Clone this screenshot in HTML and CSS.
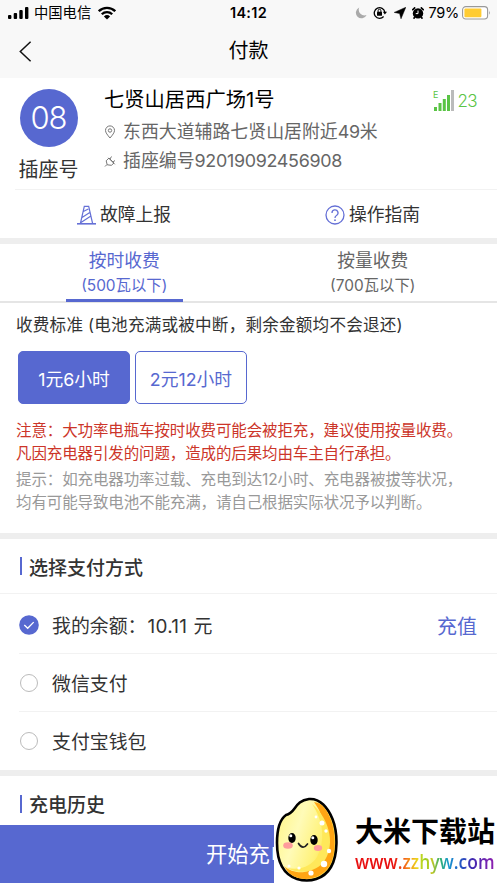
FILE: index.html
```html
<!DOCTYPE html>
<html lang="zh-CN">
<head>
<meta charset="utf-8">
<title>付款</title>
<link rel="stylesheet" href="styles.css">
</head>
<body>
<div class="screen">
  <header class="top">
    <div class="status">
      <div class="status-left">
        <svg width="21" height="14" viewBox="0 0 21 14"><rect x="0" y="9" width="3.4" height="4" rx="1"/><rect x="5.7" y="7" width="3.4" height="6" rx="1"/><rect x="11.3" y="4" width="3.4" height="9" rx="1"/><rect x="17" y="1" width="3.4" height="12" rx="1"/></svg>
        <span class="carrier">中国电信</span>
        <svg width="18" height="14" viewBox="0 0 18 14"><g fill="none" stroke="#000" stroke-width="2.3"><path d="M.8 5.2a11.7 11.7 0 0 1 16.4 0"/><path d="M3.8 8.3a7.4 7.4 0 0 1 10.4 0"/></g><path d="M5.9 10.4a4.6 4.6 0 0 1 6.2 0L9 13.5z"/></svg>
      </div>
      <div class="clock">14:12</div>
      <div class="status-right">
        <svg width="12" height="12" viewBox="0 0 12 12"><path fill="#aaa" d="M4.2.6A5.6 5.6 0 1 0 11.6 8 5.700 5.700 0 0 1 4.200.6z"/></svg>
        <svg class="lock" width="14" height="13" viewBox="0 0 14 13"><path d="M10.6 10.5a5.3 5.3 0 1 1 1.2-4.4" fill="none" stroke="#000" stroke-width="1.3"/><path d="M9.8 5.8H14L11.9 8.5z"/><rect x="4" y="5.7" width="5" height="4" rx=".5"/><path d="M5.1 6V4.7a1.4 1.4 0 0 1 2.8 0V6" fill="none" stroke="#000"/></svg>
        <svg class="nav" width="12" height="12" viewBox="0 0 12 12"><path d="M11.800.3 7 11.800 5.600 6.500.2 5.400z" stroke="#000" stroke-width=".5"/></svg>
        <svg class="alarm" width="12" height="12" viewBox="0 0 12 12"><circle cx="6" cy="6.4" r="5.200"/><path d="M.2 3.2 3.2.4M11.8 3.2 8.8.4M2.8 10 1.6 11.7M9.2 10l1.2 1.7" stroke="#000" stroke-width="1.7"/><path d="M6 3.5v3.1H3.8" fill="none" stroke="#fff"/></svg>
        <span class="percent">79%</span>
        <svg width="29" height="14" viewBox="0 0 29 14"><rect x=".6" y=".6" width="25" height="12.4" rx="3.2" fill="#fff" stroke="#999" stroke-width="1.1"/><rect x="2.4" y="2.4" width="17" height="8.8" rx="1" fill="#fc3"/><path d="M27 4.8q1.6 2 0 4z" fill="#999"/></svg>
      </div>
    </div>
    <div class="title-row">
      <svg class="back" width="13" height="21" viewBox="0 0 13 21"><path d="M11.6.8 1.3 10.5l10.3 9.7" fill="none" stroke="#111" stroke-width="1.5"/></svg>
      <h1>付款</h1>
    </div>
  </header>

  <section class="station">
    <div class="socket">
      <div class="socket-no">08</div>
      <div class="socket-label">插座号</div>
    </div>
    <div class="station-info">
      <h2>七贤山居西广场1号</h2>
      <p><svg width="12" height="14" viewBox="0 0 12 14"><g fill="none" stroke="#777"><path d="M6 13C3.500 10 1.500 7.700 1.500 5.400a4.500 4.500 0 0 1 9 0C10.500 7.700 8.500 10 6 13z"/><circle cx="6" cy="5.500" r="1.700"/></g></svg><span>东西大道辅路七贤山居附近<b class="num">49</b>米</span></p>
      <p><svg width="12" height="14" viewBox="0 0 12 14"><path d="M1 12.500 3 10.500M3.200 10.800 2.200 6.800 5 4l5 5-2.600 2.300zM6 5 7.500 2.500M9 8l2-1.500M4.300 3.800l6.500 6.500" fill="none" stroke="#777"/></svg><span>插座编号<b class="num">92019092456908</b></span></p>
    </div>
    <div class="signal">
      <svg width="21" height="21" viewBox="0 0 21 21"><g fill="#5ac445"><rect x="1" y="17" width="3" height="4"/><rect x="5.500" y="13" width="3" height="8"/><rect x="9.800" y="9" width="3" height="12"/><rect x="14" y="5" width="3" height="16"/></g><rect x="18" y="0" width="3" height="21" fill="#bbb"/><text class="edge" x="0" y="7.500">E</text></svg>
      <span>23</span>
    </div>
  </section>
  <nav class="actions">
    <div class="action"><svg width="19" height="20" viewBox="0 0 19 20"><g fill="none" stroke="#6570d6" stroke-width="1.200"><path d="M3.400 18.500 7.300 1.300h4.400l3.900 17.200M6.300 6.500l5-2.500M5 12.500l7.800-5M4 17.500l9.900-6.500"/><path d="M0 18.800h19" stroke-width="1.600"/></g></svg><span>故障上报</span></div>
    <div class="action"><svg width="20" height="20" viewBox="0 0 20 20"><g fill="none" stroke="#6570d6" stroke-width="1.300"><circle cx="10" cy="10" r="9"/><path d="M7 8a3 3 0 1 1 4.500 2.500C10.300 11.200 10 11.600 10 13"/></g><circle cx="10" cy="15.200" r=".9" fill="#6570d6"/></svg><span>操作指南</span></div>
  </nav>
  <div class="band"></div>

  <div class="tabs">
    <div class="tab active"><div class="tab-in"><span>按时收费</span><small>(500瓦以下)</small></div></div>
    <div class="tab"><div class="tab-in"><span>按量收费</span><small>(700瓦以下)</small></div></div>
  </div>
  <section class="rates">
    <p class="standard">收费标准 (电池充满或被中断，剩余金额均不会退还)</p>
    <div class="options">
      <div class="option chosen">1元6小时</div>
      <div class="option">2元12小时</div>
    </div>
    <p class="warn">注意：大功率电瓶车按时收费可能会被拒充，建议使用按量收费。<br>凡因充电器引发的问题，造成的后果均由车主自行承担。</p>
    <p class="hint">提示：如充电器功率过载、充电到达12小时、充电器被拔等状况，<br>均有可能导致电池不能充满，请自己根据实际状况予以判断。</p>
  </section>
  <div class="band"></div>

  <h3 class="heading">选择支付方式</h3>
  <ul class="methods">
    <li><svg width="20" height="20" viewBox="0 0 20 20"><circle cx="10" cy="10" r="9.800" fill="#5768d0"/><path d="m5.300 10 3.400 3.300 6-6.200" fill="none" stroke="#fff" stroke-width="1.300"/></svg><span class="label">我的余额：<b>10.11</b> 元</span><a class="topup">充值</a></li>
    <li><i class="radio"></i><span class="label">微信支付</span></li>
    <li><i class="radio"></i><span class="label">支付宝钱包</span></li>
  </ul>
  <div class="band"></div>
  <h3 class="heading history">充电历史</h3>
  <div class="start">开始充电</div>

  <div class="mark">
    <svg width="66" height="86" viewBox="0 0 66 86">
      <defs><linearGradient id="grain" x1="0" y1=".2" x2="1" y2=".65"><stop offset="0" stop-color="#fff68a"/><stop offset=".35" stop-color="#fffbb8"/><stop offset=".7" stop-color="#fff27a"/><stop offset="1" stop-color="#ffd83e"/></linearGradient></defs>
      <path d="M35 2C46 1 54 11 58.500 22 64 36 64 58 57 70 50 82 36 86 23 82 8 77 3 62 3 46 3 34 5 23 12 18 22 16 20 4 35 2z" fill="url(#grain)" stroke="#000" stroke-width="2.600"/>
      <path d="M40 5C49 6 53 13 57 23c5 13 5 34-1 45-7 12-20 16-32 13-7-2-11-7-14-12 9 8 24 9 34-1C58 54 54 24 40 5z" fill="#ffa514"/>
      <path d="M38 7c20 17 23 44 11 59-9 10-26 11-36 5 15 3 25-3 30-11 9-17 6-37-5-53z" fill="#ffe85a"/>
      <g fill="#fff"><circle cx="48" cy="26" r="2.500"/><circle cx="52" cy="34" r="1.700"/><circle cx="55" cy="54" r="2.200"/><circle cx="50" cy="67" r="3.200"/><circle cx="37" cy="76" r="2.600"/><circle cx="25" cy="71" r="1.600"/><circle cx="15" cy="69" r="1.500"/><circle cx="42" cy="20" r="1.400"/></g>
      <ellipse cx="14" cy="48.500" rx="4.800" ry="3.200" fill="#ff9c9c"/><ellipse cx="44" cy="51" rx="4.200" ry="3" fill="#ff9c9c"/>
      <ellipse cx="18" cy="41" rx="3.700" ry="5"/><ellipse cx="40" cy="43" rx="3.700" ry="5"/>
      <g fill="#fff"><circle cx="16.800" cy="38.800" r="1.500"/><circle cx="38.800" cy="40.800" r="1.500"/></g>
      <path d="M24.500 46.500q4.500 7 9 .5" fill="none" stroke="#222" stroke-width="1.700" stroke-linecap="round"/>
    </svg>
    <div class="mark-text"><div class="mark-name">大米下载站</div><div class="mark-url">www.zzhyw.com</div></div>
  </div>
</div>
</body>
</html>
```
FILE: styles.css
```css
* { box-sizing: border-box; }
body, h1, h2, h3, p, ul { margin: 0; padding: 0; }
svg { display: block; flex: none; }
body {
  background: #fff;
  color: #333;
  font-family: Inter, "Noto Sans CJK SC", sans-serif;
  font-weight: 400;
}
b { font-weight: inherit; }
.screen { position: relative; width: 497px; height: 883px; overflow: hidden; white-space: nowrap; }
.top { height: 78px; background: #f8f8f8; color: #000; }
.status { display: grid; grid-template-columns: 1fr auto 1fr; height: 25px; padding: 0 6px 0 6px; align-items: center; }
.status-left, .status-right { display: flex; align-items: center; }
.status-left { padding-left: 2px; }
.status-right { justify-content: flex-end; }
.carrier { font-size: 14.3px; line-height: 20px; margin: 0 7px 0 5px; }
.clock { font-size: 14.5px; font-weight: 600; letter-spacing: .3px; }
.lock { margin-left: 6px; }
.nav { margin-left: 7px; }
.alarm { margin-left: 6px; }
.percent { font-size: 14.5px; margin: 0 3px 0 5px; letter-spacing: -.3px; }
.title-row { display: grid; grid-template-columns: 1fr auto 1fr; align-items: center; height: 52px; }
.back { margin-left: 19px; }
h1 { font-size: 20px; font-weight: 400; line-height: 50px; }
.station { display: flex; height: 111px; padding-top: 11px; }
.socket { width: 67px; margin-left: 15px; display: flex; flex-direction: column; align-items: center; }
.socket-no { width: 58px; height: 58px; border-radius: 50%; background: #5768d0; color: #fff; font-size: 31px; font-weight: 300; line-height: 58px; text-align: center; letter-spacing: -1px; }
.socket-label { font-size: 20px; line-height: 30px; margin-top: 8px; }
.station-info { flex: 1; margin-left: 22px; }
h2 { color: #000; font-size: 20.3px; font-weight: 400; line-height: 24px; margin-top: -1px; }
.station-info p { display: flex; align-items: center; gap: 7px; height: 29px; font-size: 17.9px; line-height: 29px; color: #666; }
.station-info p:first-of-type { margin-top: 5px; }
.num { letter-spacing: -.3px; }
.signal { display: flex; height: 21px; align-items: center; gap: 3px; margin: 1px 20px 0 0; color: #5ac445; font-size: 17px; font-weight: 300; letter-spacing: -.6px; }
.edge { font-size: 9px; font-weight: 400; fill: #5ac445; }
.actions { display: flex; height: 49px; margin-left: 15px; border-top: 1px solid #f2f2f2; }
.action { display: flex; flex: none; align-items: center; width: 248px; padding: 1px 0 0 62px; gap: 4px; font-size: 17.8px; line-height: 28px; }
.band { height: 6px; background: #eee; }
.tabs { display: flex; height: 59px; border-bottom: 2px solid #e5e5e5; color: #666; }
.tab { flex: 1; display: flex; justify-content: center; }
.tab-in { width: 117px; height: 58px; padding-top: 4px; display: flex; flex-direction: column; align-items: center; font-size: 17.8px; line-height: 25px; }
.tab small { font-size: 15.4px; line-height: 25px; }
.active .tab-in { color: #5768d0; border-bottom: 3px solid #5768d0; }
.rates { height: 230px; padding: 7px 0 0 16px; }
.standard { font-size: 16.6px; line-height: 31px; letter-spacing: .2px; }
.options { display: flex; gap: 5px; margin: 10px 0 0 2px; }
.option { width: 112px; height: 53px; border: 1px solid #5768d0; border-radius: 5px; color: #5768d0; text-align: center; font-size: 17.8px; line-height: 55px; }
.chosen { background: #5768d0; color: #fff; }
.warn, .hint { font-size: 15.5px; line-height: 23px; letter-spacing: -.12px; }
.warn { color: #cc3529; margin-top: 15px; }
.hint { color: #999; margin-top: 3px; }
.heading { height: 54px; display: flex; align-items: center; gap: 7px; padding-left: 20px; font-size: 19px; font-weight: 500; }
.heading::before { content: ""; width: 2px; height: 18px; background: #5768d0; }
.methods { list-style: none; border-top: 1px solid #f2f2f2; height: 177px; font-size: 18.9px; }
.methods li { display: flex; align-items: center; height: 58px; margin-left: 19px; gap: 13px; border-top: 1px solid #f2f2f2; line-height: 28px; }
.methods li:first-child { height: 59px; border-top: 0; padding-top: 2px; }
.radio { width: 18px; height: 18px; margin: 0 1px; border: 1px solid #bbb; border-radius: 50%; }
.label, .topup { padding-top: 4px; }
.label b { letter-spacing: .3px; margin: 0 1px; }
.topup { margin-left: auto; margin-right: 20px; color: #5768d0; font-size: 20px; }
.history { height: 49px; padding-top: 6px; }
.start { height: 59px; background: #5768d0; color: #fff; font-size: 21.3px; line-height: 58px; padding-left: 206px; }
.mark { position: absolute; left: 274px; top: 797px; width: 223px; height: 86px; display: flex; background: #fff; }
.mark-text { margin: 19px 0 0 15px; }
.mark-name { color: #000; font-size: 28px; font-weight: 700; line-height: 32px; }
.mark-url { width: max-content; font-family: "Open Sans", sans-serif; font-weight: 600; font-size: 19.5px; line-height: 27px; transform: scaleX(.895); transform-origin: 0 50%; color: transparent; background: linear-gradient(90deg, #e81010 0 27%, #f05018 34%, #f5a018 40%, #e8dc1c 45%, #98d020 50%, #c8c820 55%, #30b070 61%, #1898d0 67%, #2060c8 74%, #4028b0 84%, #9020b0); background-clip: text; -webkit-background-clip: text; }
```
